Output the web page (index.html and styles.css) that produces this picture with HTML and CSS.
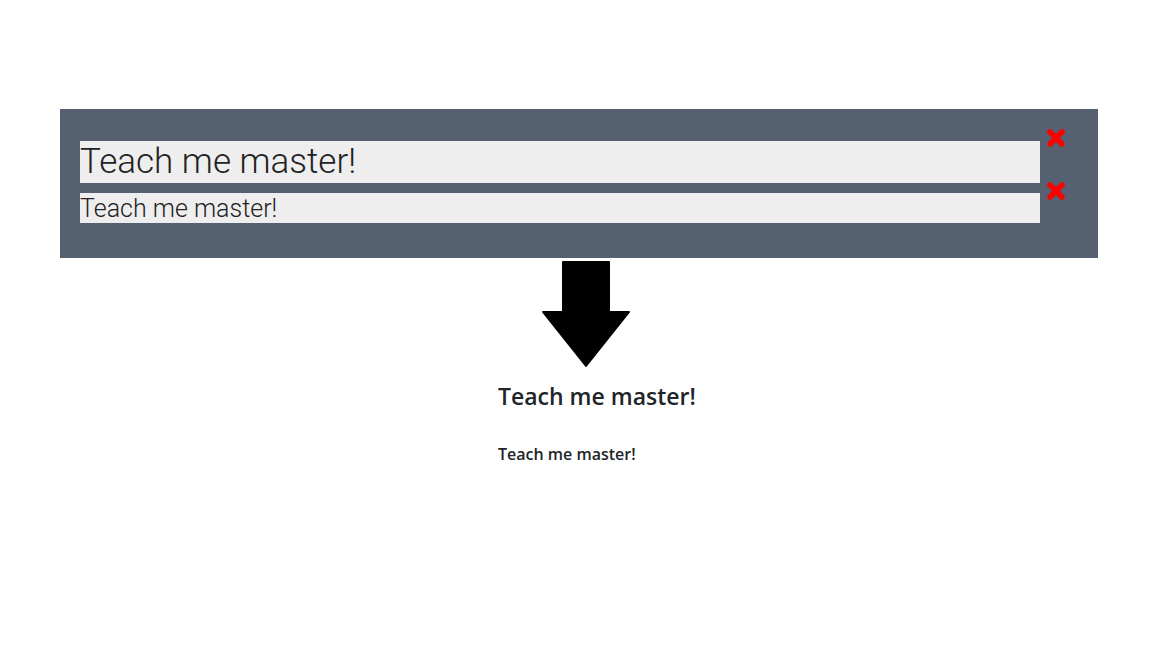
FILE: index.html
```html
<!DOCTYPE html>
<html>
<head>
<meta charset="utf-8">
<link rel="stylesheet" href="styles.css">
</head>
<body>
<div class="page">
  <div class="panel">
    <div class="row row-big">
      <div class="field field-big">Teach me master!</div>
      <span class="remove"><svg width="20" height="20" viewBox="0 0 20 20"><path d="M4 4 L16 16 M16 4 L4 16" stroke="#ff0000" stroke-width="5.5" stroke-linecap="round"/></svg></span>
    </div>
    <div class="row row-small">
      <div class="field field-small">Teach me master!</div>
      <span class="remove"><svg width="20" height="20" viewBox="0 0 20 20"><path d="M4 4 L16 16 M16 4 L4 16" stroke="#ff0000" stroke-width="5.5" stroke-linecap="round"/></svg></span>
    </div>
  </div>
  <div class="arrow">
    <svg width="92" height="108" viewBox="0 0 92 108"><path d="M23 2 L69 2 L69 52 L89 52 L46 106 L3 52 L23 52 Z" fill="#000" stroke="#000" stroke-width="2" stroke-linejoin="round"/></svg>
  </div>
  <div class="output">
    <h1 class="out-big">Teach me master!</h1>
    <h2 class="out-small">Teach me master!</h2>
  </div>
</div>
</body>
</html>
```
FILE: styles.css
```css
html, body { margin: 0; padding: 0; background: #fff; }
.page { padding-top: 109px; }
.panel {
  margin-left: 60px;
  width: 1038px;
  height: 149px;
  box-sizing: border-box;
  background: #556170;
  padding: 32px 0 0 20px;
}
.row { display: flex; align-items: flex-start; }
.row-big { height: 52px; }
.field {
  width: 960px;
  background: #eeeeee;
  color: #222;
  font-family: Roboto, sans-serif;
  font-weight: 300;
  white-space: nowrap;
  overflow: hidden;
}
.field-big { height: 42px; font-size: 35px; line-height: 42px; }
.field-small { height: 30px; font-size: 25px; line-height: 32px; }
.remove { display: block; margin-left: 6px; }
.row-big .remove { margin-top: -13px; }
.row-small .remove { margin-top: -12px; }
.arrow { margin-left: 540px; margin-top: 2px; height: 108px; }
.arrow svg { display: block; }
.output { margin-left: 498px; color: #212529; font-family: "Open Sans", sans-serif; }
.out-big { margin: 10px 0 0; font-size: 23px; font-weight: 600; line-height: 36px; }
.out-small { margin: 28px 0 0; font-size: 16px; font-weight: 600; line-height: 24px; }
```
